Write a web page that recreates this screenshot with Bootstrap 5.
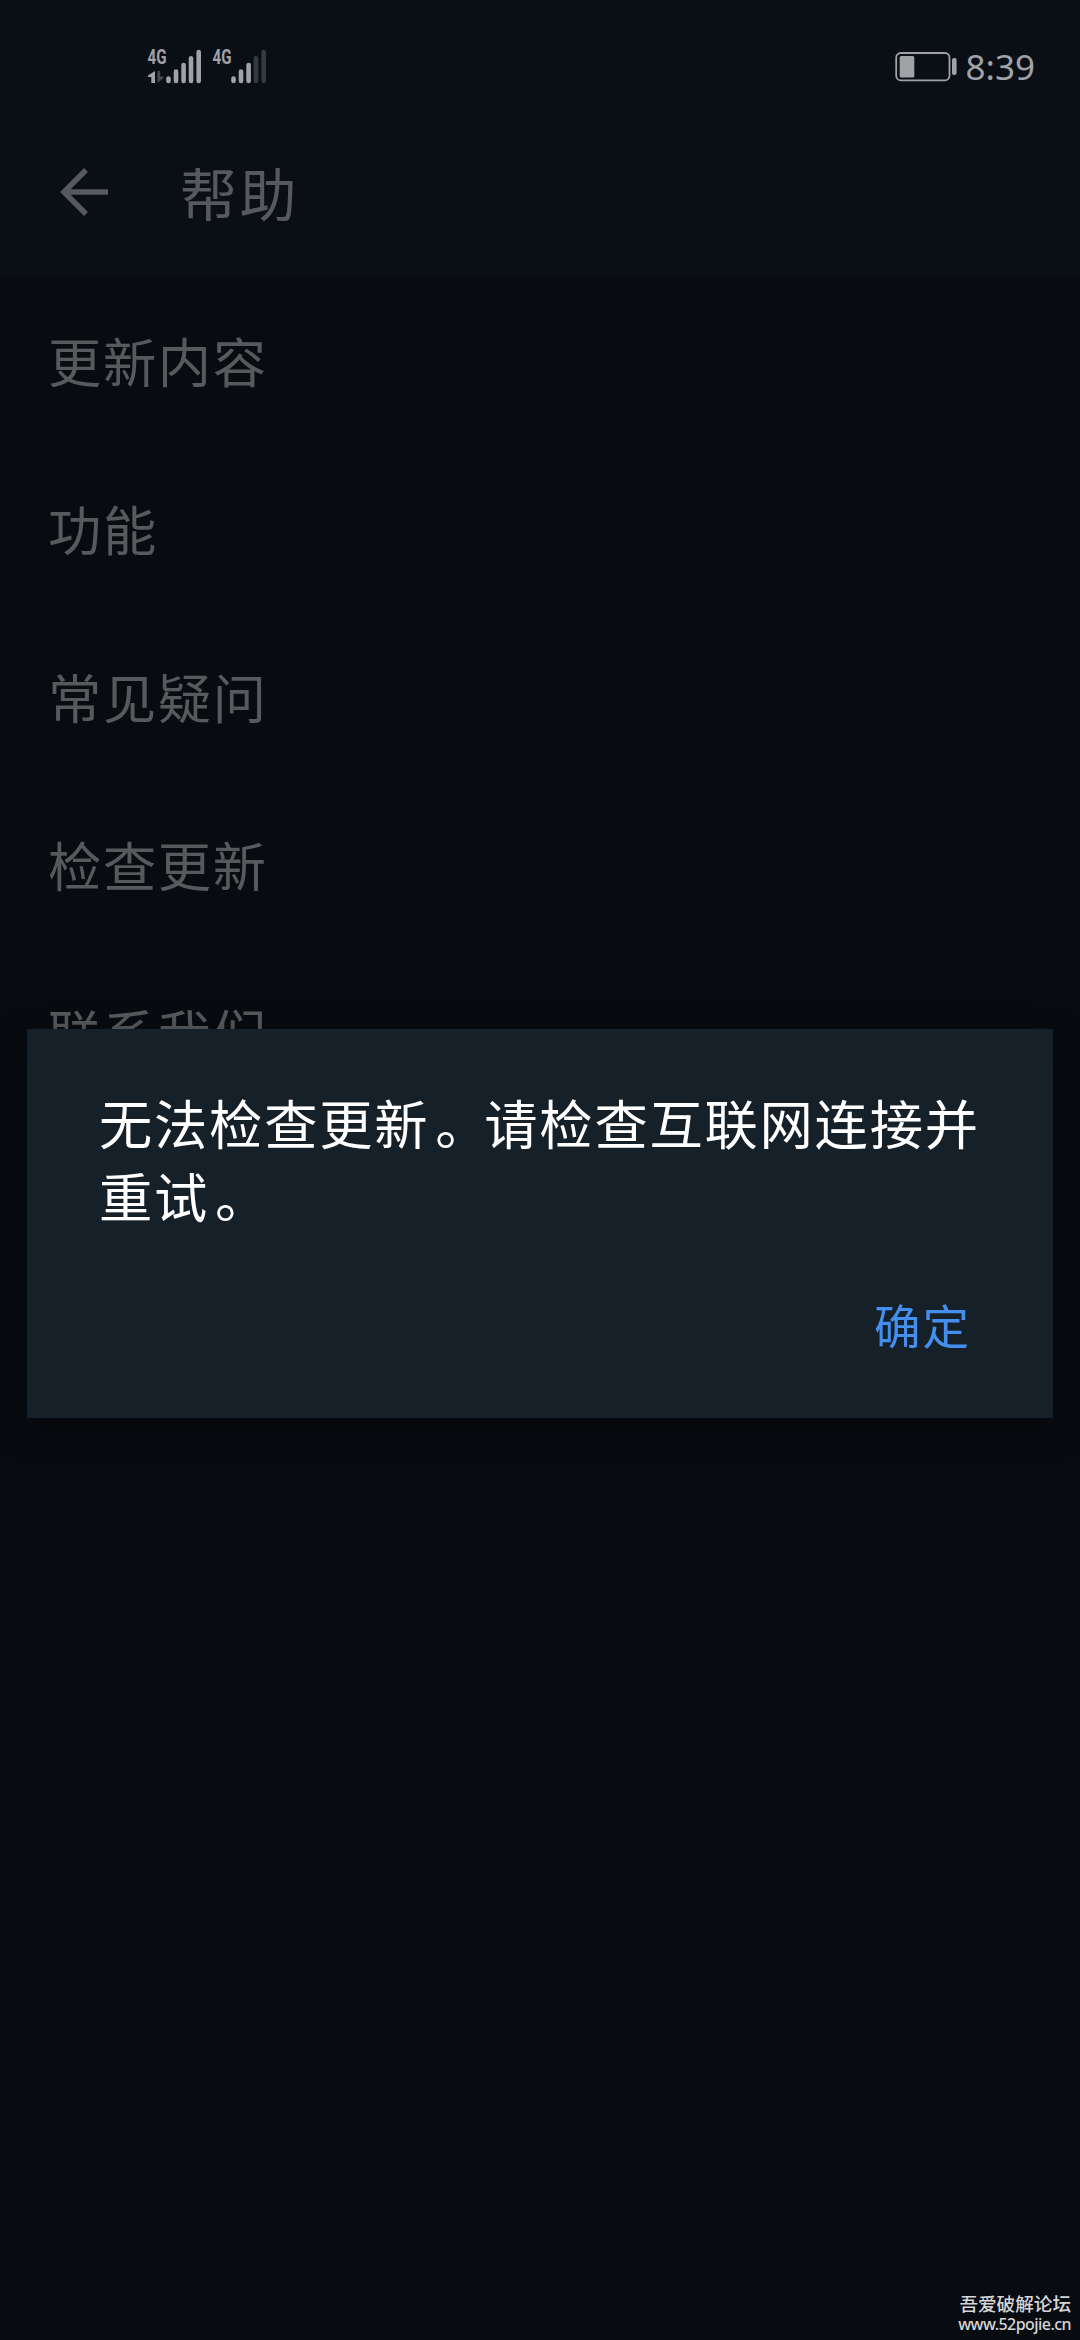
<!DOCTYPE html>
<html lang="zh-CN">
<head>
<meta charset="utf-8">
<meta name="viewport" content="width=device-width, initial-scale=1">
<title>帮助</title>
<link href="https://cdn.jsdelivr.net/npm/bootstrap@5.3.0/dist/css/bootstrap.min.css" rel="stylesheet">
<style>
  html, body { height: 2340px; }
  body { background: #080b10; color: #58595c; font-family: "Noto Sans CJK SC", sans-serif; overflow: hidden; }
  .app-top { background: #0a0f16; height: 276px; }
  .status-row { height: 116px; padding: 18px 45px 0 147px; font-family: "Noto Sans", sans-serif; color: #a0a2a6; }
  .clock { font-size: 35px; line-height: 1; padding-bottom: 2px; margin-left: 9px; }
  .title-row { height: 160px; padding: 0 0 0 60px; gap: 71px; }
  .back-icon { margin-top: 52px; }
  .title-text { font-size: 57px; letter-spacing: 2.5px; line-height: 60px; font-weight: 400; color: #58595c; margin-top: 45px; }
  .help-list .list-group-item { height: 168px; padding: 0 0 0 48px; font-size: 53.3px; letter-spacing: 1.6px; line-height: 60px; font-weight: 400; background: transparent; color: #58595c; }
  .modal-dialog.alert-pos { max-width: none; margin: 1029px 27px 0; }
  .alert-pos .modal-content { height: 389px; background: #162029; color: #fff; border: 0; border-radius: 1px; box-shadow: 0 12px 36px rgba(0,0,0,.45); }
  .alert-pos .modal-body { flex: none; padding: 56px 50px 0 72px; font-size: 53.3px; line-height: 73px; letter-spacing: 1.75px; font-weight: 400; white-space: nowrap; }
  .stop { padding-left: 6px; letter-spacing: -4.25px; }
  .alert-pos .modal-footer { padding: 63px 82px 0 0; border: 0; }
  .ok-btn { font-size: 46.5px; line-height: 60px; letter-spacing: 2px; font-weight: 400; color: #448fee; --bs-btn-color: #448fee; }
  .stamp { right: 9px; bottom: 6px; color: #d5d6d8; font-size: 18.6px; line-height: 22px; font-weight: 500; }
  .stamp .site { font-family: "Noto Sans", sans-serif; font-size: 16px; letter-spacing: -.55px; line-height: 20px; }
</style>
<script src="https://cdn.jsdelivr.net/npm/bootstrap@5.3.0/dist/js/bootstrap.bundle.min.js"></script>
</head>
<body>
<header class="app-top">
  <div class="status-row d-flex align-items-center justify-content-between">
    <svg width="122" height="40" viewBox="147 46 122 40" fill="#a0a2a6" font-family="Roboto, sans-serif" font-weight="700" font-size="19.5">
      <text x="147.5" y="63" textLength="19" lengthAdjust="spacingAndGlyphs">4G</text>
      <text x="212.5" y="63" textLength="19" lengthAdjust="spacingAndGlyphs">4G</text>
      <path d="M155 70v12h-3.7v-6H148v-1.5z"/>
      <path d="M157.5 70h2.7v5.5h3.2V77l-5.9 5z" fill="#45484e"/>
      <g stroke="#a0a2a6" stroke-width="4.6" stroke-linecap="round">
        <path d="M168.5 77.6v2.4M176 70.5V80M183.6 64V80M191 57.3V80M198.7 51V80"/>
        <path d="M233.5 77.6v2.4M241 70.5V80M248.6 64V80"/>
        <path stroke="#363940" d="M256 57.3V80M263.7 51V80"/>
      </g>
    </svg>
    <div class="d-flex align-items-center">
      <svg width="62" height="30" viewBox="893 52 62 30">
        <rect x="894.2" y="53" width="53.3" height="27.3" rx="4.5" fill="none" stroke="#a0a2a6" stroke-width="1.8"/>
        <rect x="897.7" y="56" width="14.6" height="21.6" rx="1.5" fill="#a0a2a6"/>
        <rect x="950" y="58" width="4.6" height="17" rx="2" fill="#a0a2a6"/>
      </svg>
      <span class="clock">8:39</span>
    </div>
  </div>
  <div class="title-row d-flex align-items-start">
    <svg width="49" height="49" viewBox="0 0 49 49" class="back-icon" fill="none" stroke="#58595c" stroke-width="5.6"><path d="M48 24H5M26 2L4 24l22 22"/></svg>
    <h1 class="title-text mb-0">帮助</h1>
  </div>
</header>

<main class="list-group list-group-flush help-list">
  <div class="list-group-item border-0 d-flex align-items-center">更新内容</div>
  <div class="list-group-item border-0 d-flex align-items-center">功能</div>
  <div class="list-group-item border-0 d-flex align-items-center">常见疑问</div>
  <div class="list-group-item border-0 d-flex align-items-center">检查更新</div>
  <div class="list-group-item border-0 d-flex align-items-center">联系我们</div>
</main>

<div class="modal d-block overflow-hidden" tabindex="-1" role="dialog">
  <div class="modal-dialog alert-pos">
    <div class="modal-content">
      <div class="modal-body">无法检查更新<span class="stop">。</span>请检查互联网连接并<br>重试<span class="stop">。</span></div>
      <div class="modal-footer"><button type="button" class="btn ok-btn border-0 p-0 m-0">确定</button></div>
    </div>
  </div>
</div>

<div class="stamp position-absolute text-end">
  <div>吾爱破解论坛</div>
  <div class="site">www.52pojie.cn</div>
</div>
</body>
</html>
